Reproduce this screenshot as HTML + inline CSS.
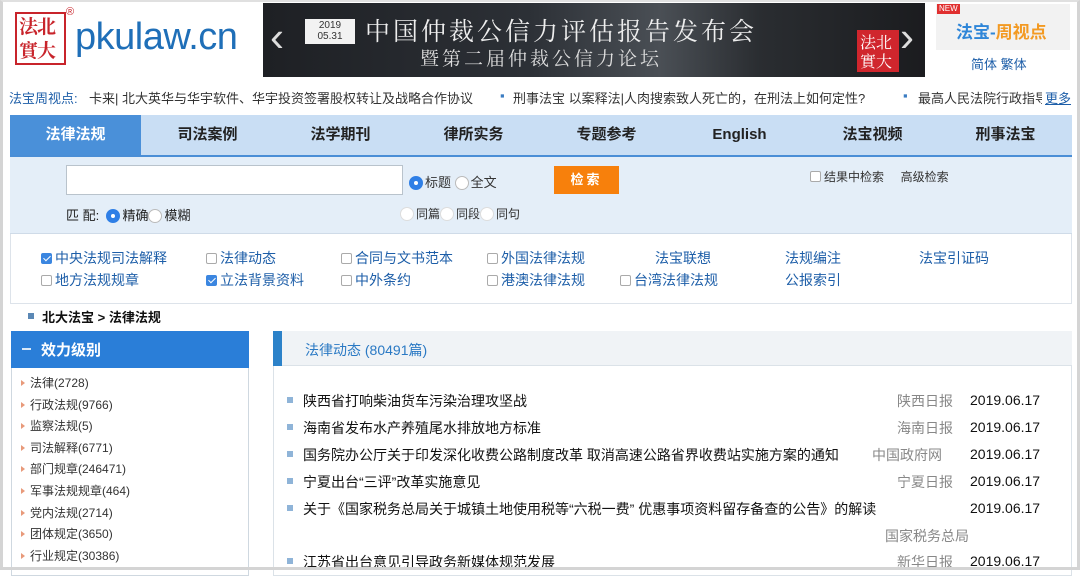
<!DOCTYPE html>
<html><head><meta charset="utf-8">
<style>
*{margin:0;padding:0;box-sizing:border-box}
body{width:1080px;height:570px;overflow:hidden;background:#fff;font-family:"Liberation Sans","Noto Sans CJK SC",sans-serif;color:#222;position:relative}
.a{position:absolute;white-space:nowrap}
.frame{position:absolute;left:0;top:0;width:1080px;height:570px;border:3px solid #d4d4d4;border-top:2px solid #e0e0e0;pointer-events:none}
.nav span{position:absolute;top:0;line-height:40px;font-size:15px;font-weight:bold;color:#222;text-align:center}
.cb{display:inline-block;width:11px;height:11px;border:1px solid #aaa;border-radius:2px;background:#fff;vertical-align:-1px;margin-right:3px}
.cb.on{background:#3b86e0;border-color:#3b86e0;position:relative}
.cb.on:after{content:"";position:absolute;left:3px;top:0px;width:3px;height:6px;border:solid #fff;border-width:0 1.5px 1.5px 0;transform:rotate(45deg)}
.rd{display:inline-block;width:14px;height:14px;border:1px solid #bbb;border-radius:50%;background:#fff;vertical-align:-3px;margin-right:2px}
.rd.on{background:#2f7fe6;border-color:#2f7fe6;position:relative}
.rd.on:after{content:"";position:absolute;left:4px;top:4px;width:4px;height:4px;border-radius:50%;background:#fff}
.opt{font-size:14px;color:#1d5ea8}
.lst{font-size:12px;color:#333}
.lst i{display:inline-block;width:0;height:0;border-left:4px solid #e89a7a;border-top:3px solid transparent;border-bottom:3px solid transparent;margin-right:5px;vertical-align:1px}
.row{font-size:14px;color:#111}
.row b{display:inline-block;width:6px;height:6px;background:#8fb4d8;margin-right:10px;vertical-align:3px}
.src{font-size:14px;color:#888}
.dt{font-size:14px;color:#111}
.tk{font-size:13px;color:#333;top:88px}
</style></head><body>
<!-- logo -->
<div class="a" style="left:15px;top:12px;width:51px;height:53px;border:2px solid #c8242b;background:#fff"></div>
<div class="a" style="left:19px;top:14px;font-size:19px;line-height:24px;color:#c8242b;font-family:'Noto Serif CJK SC',serif;font-weight:bold;letter-spacing:-1px">法北<br>實大</div>
<div class="a" style="left:66px;top:6px;font-size:11px;color:#c8242b">®</div>
<div class="a" style="left:75px;top:16px;font-size:38px;color:#1f6fb8;letter-spacing:-0.5px">pkulaw.cn</div>
<!-- banner -->
<div class="a" style="left:263px;top:3px;width:662px;height:74px;background:linear-gradient(90deg,#1e2024 0%,#2c3036 40%,#4a4f55 60%,#2a2d31 75%,#1b1c1f 100%)"></div>
<div class="a" style="left:270px;top:14px;font-size:42px;color:#ddd;line-height:46px">‹</div>
<div class="a" style="left:305px;top:19px;width:50px;height:25px;background:#f2f2f2;font-size:10px;line-height:11px;text-align:center;color:#333;padding-top:1px">2019<br>05.31</div>
<div class="a" style="left:365px;top:12px;font-size:25px;color:#eee;letter-spacing:3px;font-family:'Noto Serif CJK SC',serif">中国仲裁公信力评估报告发布会</div>
<div class="a" style="left:420px;top:44px;font-size:19px;color:#ddd;letter-spacing:3px;font-family:'Noto Serif CJK SC',serif">暨第二届仲裁公信力论坛</div>
<div class="a" style="left:857px;top:30px;width:42px;height:42px;background:#d0262d;color:#fff;font-size:16px;line-height:19px;padding:2px 3px;font-family:'Noto Serif CJK SC',serif">法北<br>實大</div>
<div class="a" style="left:900px;top:14px;font-size:42px;color:#ddd;line-height:46px">›</div>
<!-- right box -->
<div class="a" style="left:936px;top:4px;width:134px;height:46px;background:#f2f2f2"></div>
<div class="a" style="left:937px;top:4px;background:#e03030;color:#fff;font-size:8px;padding:0 2px;line-height:10px">NEW</div>
<div class="a" style="left:956px;top:18px;font-size:17px;font-weight:bold;color:#2f86d8">法宝-<span style="color:#f39a23">周视点</span></div>
<div class="a" style="left:971px;top:54px;font-size:13px;color:#1d5ea8">简体 繁体</div>
<!-- ticker -->
<div class="a tk" style="left:9px;color:#1d5ea8">法宝周视点:</div>
<div class="a tk" style="left:89px">卡来| 北大英华与华宇软件、华宇投资签署股权转让及战略合作协议</div>
<div class="a tk" style="left:500px;color:#3a7cc2">▪</div>
<div class="a tk" style="left:513px">刑事法宝 以案释法|人肉搜索致人死亡的，在刑法上如何定性?</div>
<div class="a tk" style="left:903px;color:#3a7cc2">▪</div>
<div class="a" style="left:918px;top:86px;width:124px;height:20px;overflow:hidden"><div class="a tk" style="left:0;top:2px">最高人民法院行政指导性案例</div></div>
<div class="a tk" style="left:1045px;color:#1d5ea8;text-decoration:underline">更多</div>
<!-- nav -->
<div class="a nav" style="left:10px;top:115px;width:1062px;height:42px;background:#c9def4;border-bottom:2px solid #4a8ed6">
<span style="left:0;width:131px;background:#4a90d9;color:#fff;height:40px">法律法规</span>
<span style="left:131px;width:133px">司法案例</span>
<span style="left:264px;width:133px">法学期刊</span>
<span style="left:397px;width:133px">律所实务</span>
<span style="left:530px;width:133px">专题参考</span>
<span style="left:663px;width:133px">English</span>
<span style="left:796px;width:133px">法宝视频</span>
<span style="left:929px;width:133px">刑事法宝</span>
</div>
<!-- search -->
<div class="a" style="left:10px;top:157px;width:1062px;height:77px;background:#e4eef8;border-bottom:1px solid #cfdbe8"></div>
<div class="a" style="left:66px;top:165px;width:337px;height:30px;background:#fff;border:1px solid #b9c3cc"></div>
<div class="a" style="left:409px;top:172px;font-size:13px;color:#333"><span class="rd on"></span>标题 <span class="rd"></span>全文</div>
<div class="a" style="left:554px;top:166px;width:65px;height:28px;background:#f7800c;color:#fff;font-size:13px;font-weight:bold;text-align:center;line-height:28px;letter-spacing:3px">检索</div>
<div class="a" style="left:810px;top:168px;font-size:12px;color:#333"><span class="cb"></span>结果中检索 &nbsp;&nbsp;&nbsp;&nbsp;高级检索</div>
<div class="a" style="left:66px;top:205px;font-size:13px;color:#222">匹 配: &nbsp;<span class="rd on"></span>精确<span class="rd"></span>模糊</div>
<div class="a" style="left:400px;top:205px;font-size:12px;color:#333"><span class="rd" style="border-color:#ddd"></span>同篇<span class="rd" style="border-color:#ddd"></span>同段<span class="rd" style="border-color:#ddd"></span>同句</div>
<!-- options -->
<div class="a" style="left:10px;top:234px;width:1062px;height:70px;border:1px solid #dde3ea;border-top:none"></div>
<div class="a opt" style="left:41px;top:248px"><span class="cb on"></span>中央法规司法解释</div>
<div class="a opt" style="left:206px;top:248px"><span class="cb"></span>法律动态</div>
<div class="a opt" style="left:341px;top:248px"><span class="cb"></span>合同与文书范本</div>
<div class="a opt" style="left:487px;top:248px"><span class="cb"></span>外国法律法规</div>
<div class="a opt" style="left:655px;top:248px">法宝联想</div>
<div class="a opt" style="left:785px;top:248px">法规编注</div>
<div class="a opt" style="left:919px;top:248px">法宝引证码</div>
<div class="a opt" style="left:41px;top:270px"><span class="cb"></span>地方法规规章</div>
<div class="a opt" style="left:206px;top:270px"><span class="cb on"></span>立法背景资料</div>
<div class="a opt" style="left:341px;top:270px"><span class="cb"></span>中外条约</div>
<div class="a opt" style="left:487px;top:270px"><span class="cb"></span>港澳法律法规</div>
<div class="a opt" style="left:620px;top:270px"><span class="cb"></span>台湾法律法规</div>
<div class="a opt" style="left:785px;top:270px">公报索引</div>
<!-- breadcrumb -->
<div class="a" style="left:28px;top:313px;width:6px;height:6px;background:#5b88b5"></div>
<div class="a" style="left:42px;top:307px;font-size:13px;font-weight:bold;color:#111">北大法宝 &gt; 法律法规</div>
<!-- left panel -->
<div class="a" style="left:11px;top:331px;width:238px;height:245px;border:1px solid #cfd8e0"></div>
<div class="a" style="left:11px;top:331px;width:238px;height:37px;background:#2a7ed8"></div>
<div class="a" style="left:22px;top:348px;width:9px;height:2px;background:#d8e8f8"></div>
<div class="a" style="left:41px;top:339px;font-size:15px;font-weight:bold;color:#fff">效力级别</div>
<div class="a lst" style="left:21px;top:373px;line-height:21.6px">
<div><i></i>法律(2728)</div><div><i></i>行政法规(9766)</div><div><i></i>监察法规(5)</div><div><i></i>司法解释(6771)</div><div><i></i>部门规章(246471)</div><div><i></i>军事法规规章(464)</div><div><i></i>党内法规(2714)</div><div><i></i>团体规定(3650)</div><div><i></i>行业规定(30386)</div></div>
<!-- right panel -->
<div class="a" style="left:273px;top:331px;width:799px;height:245px;border:1px solid #dbe2e8"></div>
<div class="a" style="left:273px;top:331px;width:799px;height:35px;background:#f0f3f6;border-bottom:1px solid #dbe2e8"></div>
<div class="a" style="left:273px;top:331px;width:9px;height:35px;background:#2c82c9"></div>
<div class="a" style="left:305px;top:340px;font-size:14px;color:#2a79c4">法律动态 (80491篇)</div>
<div class="a row" style="left:287px;top:391px"><b></b>陕西省打响柴油货车污染治理攻坚战</div>
<div class="a row" style="left:287px;top:418px"><b></b>海南省发布水产养殖尾水排放地方标准</div>
<div class="a row" style="left:287px;top:445px"><b></b>国务院办公厅关于印发深化收费公路制度改革 取消高速公路省界收费站实施方案的通知</div>
<div class="a row" style="left:287px;top:472px"><b></b>宁夏出台“三评”改革实施意见</div>
<div class="a row" style="left:287px;top:499px"><b></b>关于《国家税务总局关于城镇土地使用税等“六税一费” 优惠事项资料留存备查的公告》的解读</div>
<div class="a row" style="left:287px;top:552px"><b></b>江苏省出台意见引导政务新媒体规范发展</div>
<div class="a src" style="left:897px;top:391px">陕西日报</div>
<div class="a src" style="left:897px;top:418px">海南日报</div>
<div class="a src" style="left:872px;top:445px">中国政府网</div>
<div class="a src" style="left:897px;top:472px">宁夏日报</div>
<div class="a src" style="left:885px;top:526px">国家税务总局</div>
<div class="a src" style="left:897px;top:552px">新华日报</div>
<div class="a dt" style="left:970px;top:392px">2019.06.17</div>
<div class="a dt" style="left:970px;top:419px">2019.06.17</div>
<div class="a dt" style="left:970px;top:446px">2019.06.17</div>
<div class="a dt" style="left:970px;top:473px">2019.06.17</div>
<div class="a dt" style="left:970px;top:500px">2019.06.17</div>
<div class="a dt" style="left:970px;top:553px">2019.06.17</div>
<div class="frame"></div>
</body></html>
